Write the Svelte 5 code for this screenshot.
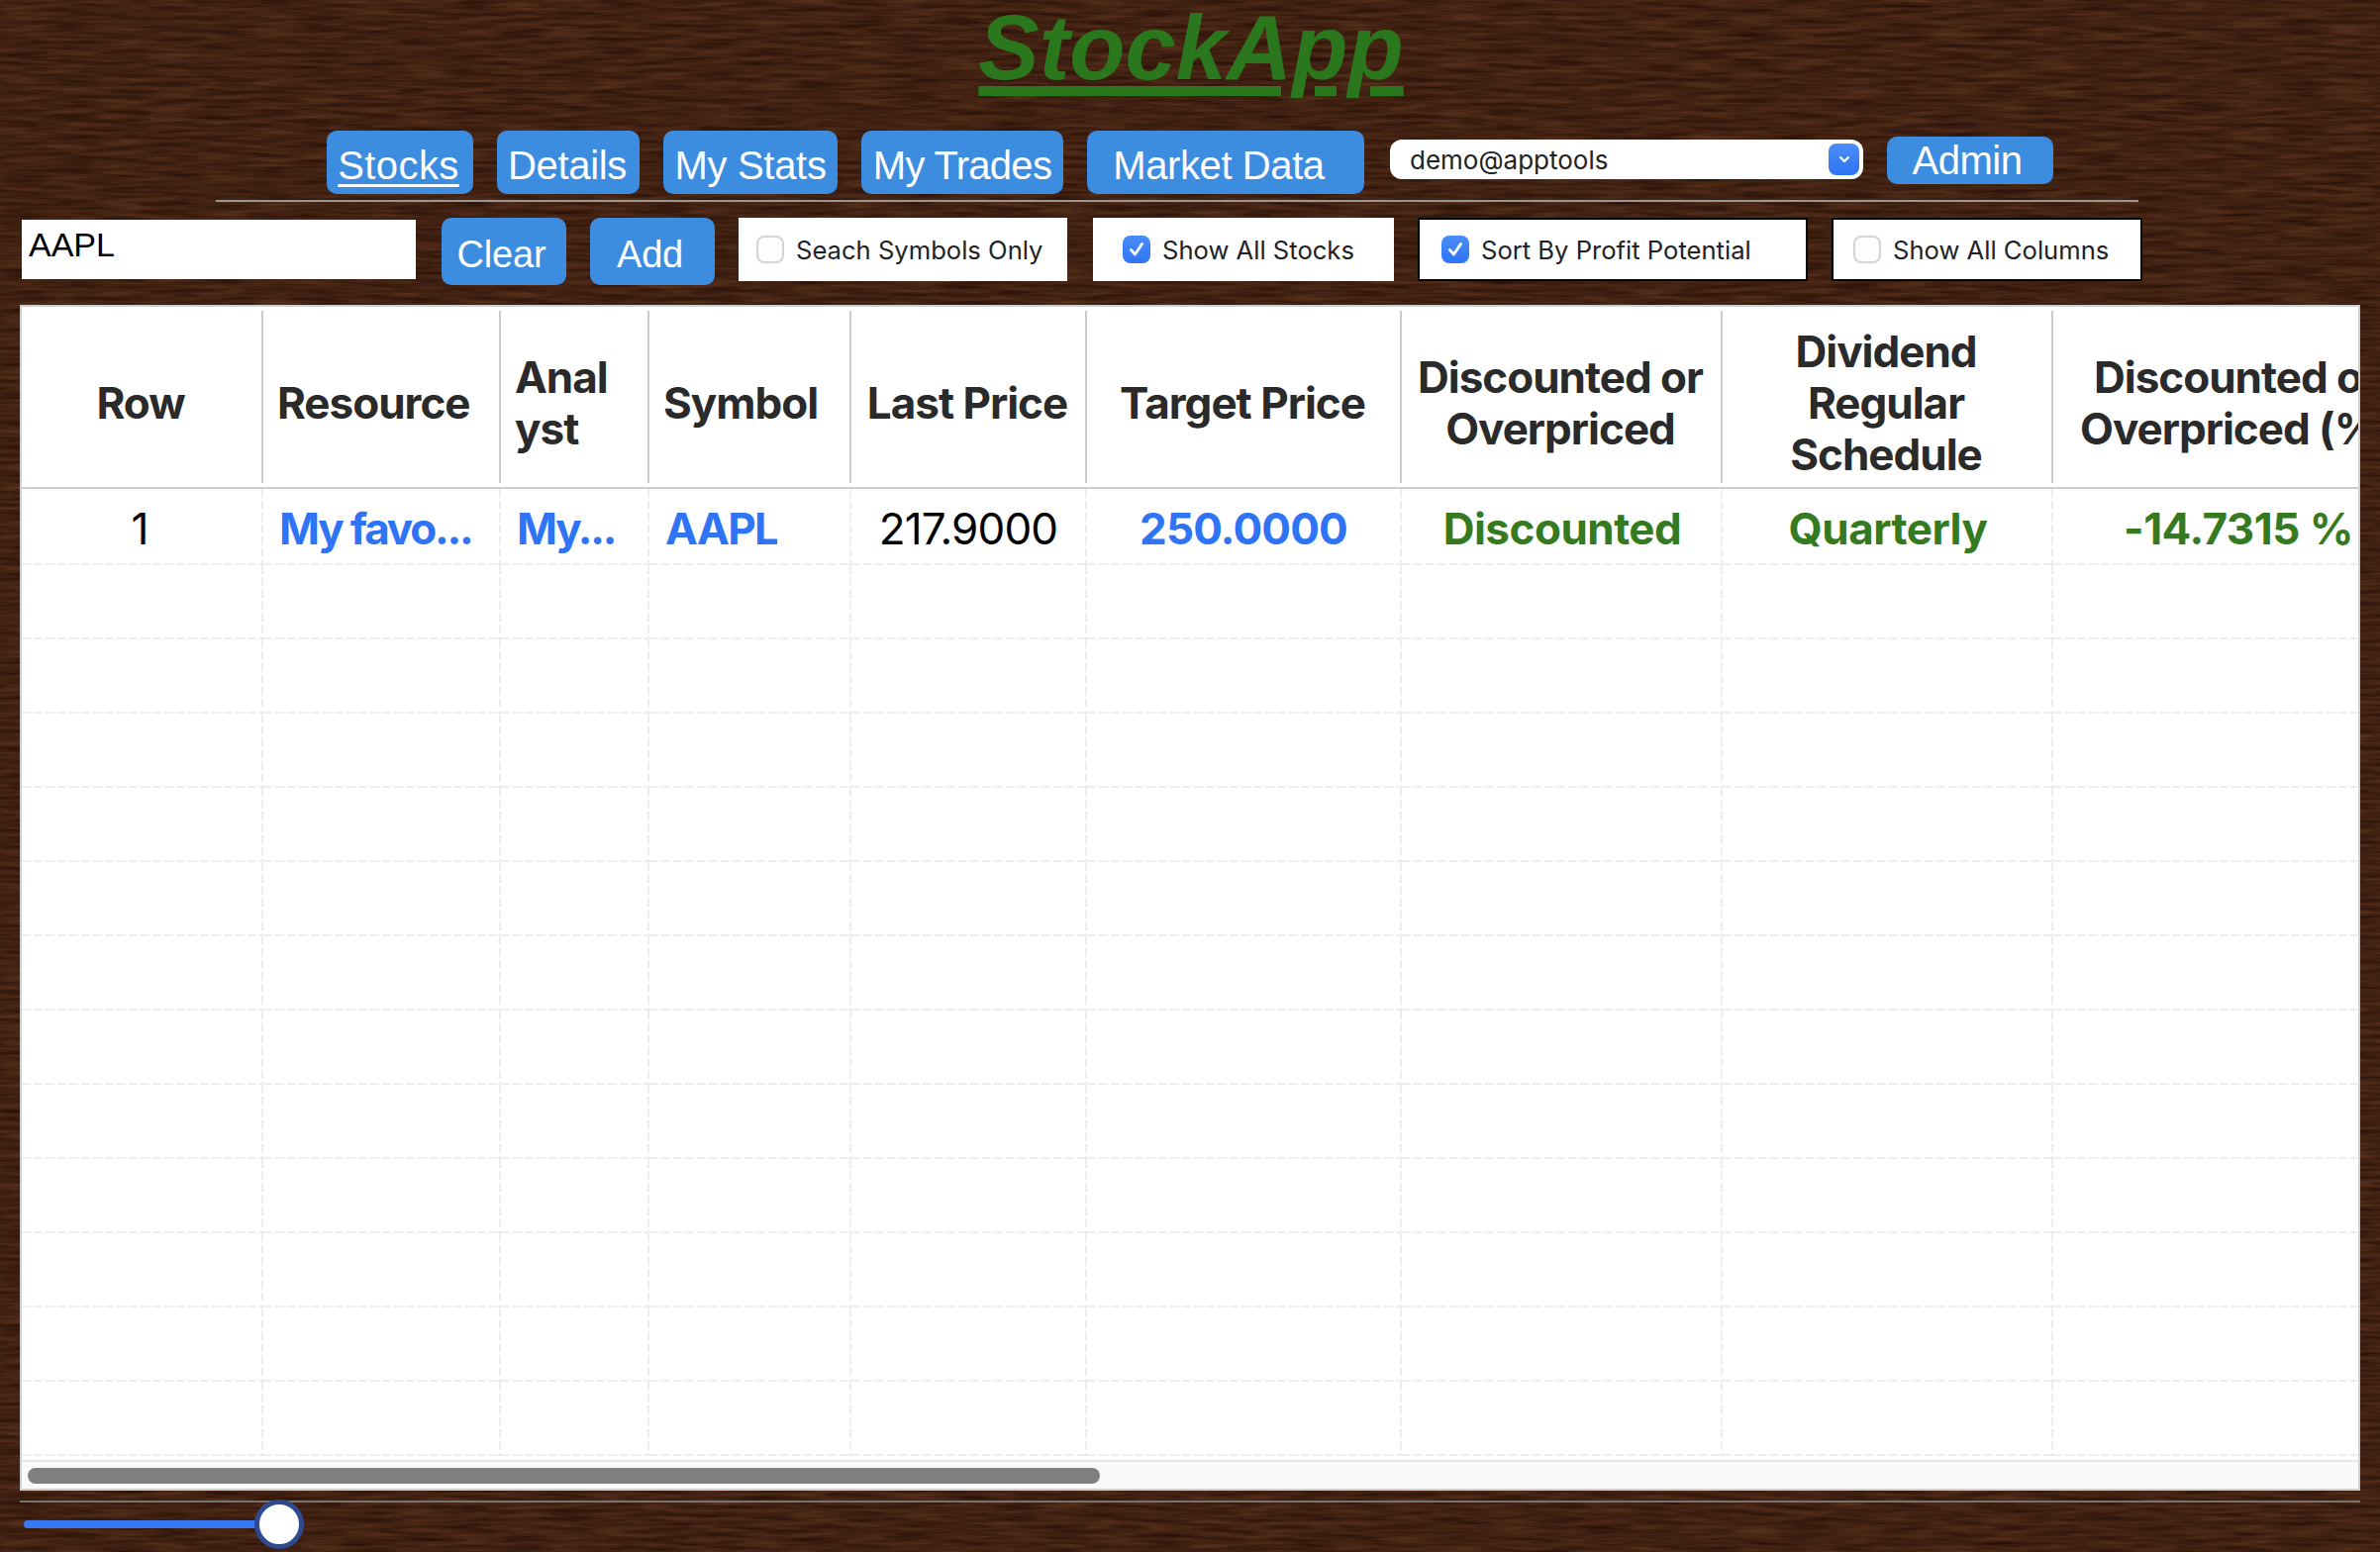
<script>
	const navItems = [
		{ label: 'Stocks', cls: 'w-stocks' },
		{ label: 'Details', cls: 'w-details' },
		{ label: 'My Stats', cls: 'w-stats' },
		{ label: 'My Trades', cls: 'w-trades' },
		{ label: 'Market Data', cls: 'w-market' }
	];
	const filters = [
		{ label: 'Seach Symbols Only', checked: false, framed: false, cls: 'f-search' },
		{ label: 'Show All Stocks', checked: true, framed: false, cls: 'f-all' },
		{ label: 'Sort By Profit Potential', checked: true, framed: true, cls: 'f-sort' },
		{ label: 'Show All Columns', checked: false, framed: true, cls: 'f-cols' }
	];
	const headers = [
		{ text: 'Row', align: 'center' },
		{ text: 'Resource', align: 'left' },
		{ text: 'Anal\u200Byst', align: 'left' },
		{ text: 'Symbol', align: 'left' },
		{ text: 'Last Price', align: 'center' },
		{ text: 'Target Price', align: 'center' },
		{ text: 'Discounted or Overpriced', align: 'center' },
		{ text: 'Dividend Regular Schedule', align: 'center' },
		{ text: 'Discounted or Overpriced (%)', align: 'center' }
	];
	const firstRow = [
		{ text: '1', cls: 'plain center row-num' },
		{ text: 'My favo...', cls: 'link left tight' },
		{ text: 'My...', cls: 'link left tight' },
		{ text: 'AAPL', cls: 'link left' },
		{ text: '217.9000', cls: 'plain center' },
		{ text: '250.0000', cls: 'link center' },
		{ text: 'Discounted', cls: 'good center' },
		{ text: 'Quarterly', cls: 'good center' },
		{ text: '-14.7315 %', cls: 'good center' }
	];
	const emptyRows = Array.from({ length: 12 });
</script>

<div class="page">
	<svg class="wood" width="2404" height="1568" aria-hidden="true">
		<filter id="grain" x="0" y="0" width="100%" height="100%" color-interpolation-filters="sRGB">
			<feTurbulence type="fractalNoise" baseFrequency="0.02 0.24" numOctaves="4" seed="7" />
			<feColorMatrix
				type="matrix"
				values="0.26 0 0 0 0.125
				        0.17 0 0 0 0.045
				        0.11 0 0 0 0.015
				        0 0 0 0 1"
			/>
		</filter>
		<rect width="2404" height="1568" filter="url(#grain)" />
	</svg>

	<div class="content">
		<h1 class="title">StockApp</h1>

		<nav class="nav">
			{#each navItems as item, i}
				<button class="nav-btn {item.cls}" class:active={i === 0}>{item.label}</button>
			{/each}
			<div class="user-select">
				<select>
					<option>demo@apptools</option>
				</select>
				<span class="chevron">
					<svg width="14" height="10" viewBox="0 0 14 10">
						<path d="M3 3 L7 7 L11 3" fill="none" stroke="#fff" stroke-width="2.2" stroke-linecap="round" stroke-linejoin="round" />
					</svg>
				</span>
			</div>
			<button class="admin-btn">Admin</button>
		</nav>
		<div class="rule top-rule"></div>

		<div class="toolbar">
			<input class="symbol-input" type="text" value="AAPL" />
			<button class="tool-btn clear">Clear</button>
			<button class="tool-btn add">Add</button>
			{#each filters as f}
				<label class="filter {f.cls}" class:framed={f.framed}>
					<span class="box" class:checked={f.checked}>
						{#if f.checked}
							<svg width="20" height="20" viewBox="0 0 20 20">
								<path d="M4.5 10.5 L8.5 15 L15.5 4.5" fill="none" stroke="#fff" stroke-width="2.8" stroke-linecap="round" stroke-linejoin="round" />
							</svg>
						{/if}
					</span>
					{f.label}
				</label>
			{/each}
		</div>

		<div class="grid-wrap">
			<div class="grid-view">
				<div class="row head">
					{#each headers as h}
						<div class="th {h.align}">
							<span>{h.text}</span>
						</div>
					{/each}
				</div>
				<div class="row body-row">
					{#each firstRow as c}
						<div class="td {c.cls}"><span>{c.text}</span></div>
					{/each}
				</div>
				{#each emptyRows as _}
					<div class="row body-row">
						{#each headers as h}
							<div class="td"></div>
						{/each}
					</div>
				{/each}
			</div>
			<div class="scrollbar">
				<div class="scroll-thumb"></div>
			</div>
		</div>

		<div class="rule bottom-rule"></div>
		<input class="zoom-slider" type="range" min="0" max="100" value="100" />
	</div>
</div>

<style>
	:global(body) {
		margin: 0;
		background: #3f2213;
	}
	.page {
		position: relative;
		width: 2404px;
		height: 1568px;
		overflow: hidden;
		font-family: Inter, "Liberation Sans", sans-serif;
	}
	.wood {
		position: absolute;
		left: 0;
		top: 0;
	}
	.content {
		position: relative;
		display: flex;
		flex-direction: column;
	}
	.title {
		margin: 0;
		height: 130px;
		padding: 2px 0 0 2px;
		text-align: center;
		font-family: "Liberation Sans", Arial, sans-serif;
		font-size: 92px;
		line-height: 92px;
		font-weight: 700;
		font-style: italic;
		color: #2b771d;
		text-decoration: underline;
		text-decoration-thickness: 10px;
		text-underline-offset: 7px;
	}
	.nav {
		display: flex;
		justify-content: center;
		align-items: flex-start;
		gap: 24px;
		height: 64px;
	}
	button {
		border: none;
		background: #3c8ddf;
		color: #fff;
		border-radius: 10px;
		font-family: "Liberation Sans", Arial, sans-serif;
		font-size: 40px;
	}
	.nav-btn {
		height: 64px;
		padding: 6px 0 0;
		letter-spacing: -0.3px;
	}
	.w-stocks {
		width: 148px;
		padding-right: 3px;
		letter-spacing: 0.4px;
	}
	.w-details { width: 144px; padding-right: 2px; }
	.w-stats { width: 176px; }
	.w-trades { width: 204px; letter-spacing: -0.7px; }
	.w-market { width: 280px; padding-right: 14px; letter-spacing: -0.4px; }
	.nav-btn.active {
		text-decoration: underline;
		text-decoration-thickness: 3px;
		text-underline-offset: 5px;
	}
	.user-select {
		position: relative;
		margin: 9px 0 0 2px;
		width: 478px;
		height: 40px;
	}
	.user-select select {
		appearance: none;
		width: 100%;
		height: 100%;
		border: none;
		border-radius: 12px;
		background: #fff;
		padding: 0 20px;
		font-family: Inter, "Liberation Sans", sans-serif;
		font-size: 26px;
		color: #222;
	}
	.chevron {
		position: absolute;
		right: 4px;
		top: 4px;
		width: 31px;
		height: 32px;
		border-radius: 8px;
		background: linear-gradient(#4a8df8, #2f74f5);
		display: flex;
		align-items: center;
		justify-content: center;
	}
	.admin-btn {
		margin-top: 6px;
		width: 168px;
		height: 48px;
		padding: 0 6px 0 0;
		letter-spacing: -0.5px;
	}
	.rule {
		height: 2px;
	}
	.top-rule {
		margin: 6px 0 0 218px;
		width: 1942px;
		background: #9b9792;
	}
	.toolbar {
		display: flex;
		align-items: flex-start;
		margin-top: 16px;
		padding-left: 22px;
		height: 88px;
	}
	.symbol-input {
		box-sizing: border-box;
		margin-top: 2px;
		width: 398px;
		height: 60px;
		border: none;
		border-radius: 0;
		padding: 0 0 10px 7px;
		background: #fff;
		color: #000;
		font-family: "Liberation Sans", Arial, sans-serif;
		font-size: 34px;
		outline: none;
	}
	.tool-btn {
		height: 68px;
		width: 126px;
		padding: 6px 5px 0 0;
		font-size: 38px;
		letter-spacing: -0.2px;
	}
	.clear {
		margin-left: 26px;
	}
	.add {
		margin-left: 24px;
	}
	.filter {
		box-sizing: border-box;
		display: flex;
		align-items: center;
		gap: 12px;
		height: 64px;
		background: #fff;
		color: #222;
		font-size: 25.6px;
		white-space: nowrap;
	}
	.filter.framed {
		border: 2px solid #000;
	}
	.f-search {
		margin-left: 24px;
		width: 332px;
		padding-left: 18px;
	}
	.f-all {
		margin-left: 26px;
		width: 304px;
		padding-left: 30px;
	}
	.f-sort {
		margin-left: 24px;
		width: 394px;
		padding-left: 22px;
	}
	.f-cols {
		margin-left: 24px;
		width: 314px;
		padding-left: 20px;
	}
	.box {
		box-sizing: border-box;
		flex: none;
		width: 28px;
		height: 28px;
		border-radius: 8px;
		border: 2px solid #d4d4d4;
		background: #fdfdfd;
		display: flex;
		align-items: center;
		justify-content: center;
	}
	.box.checked {
		border: none;
		background: linear-gradient(#4a8df8, #2f74f5);
	}
	.grid-wrap {
		box-sizing: border-box;
		margin: 0 20px;
		height: 1198px;
		background: #fff;
		border: 2px solid #cfcfcf;
		display: flex;
		flex-direction: column;
	}
	.grid-view {
		flex: 1;
		overflow: hidden;
		display: flex;
		flex-direction: column;
	}
	.row {
		flex: none;
		display: grid;
		grid-template-columns: 244px 240px 150px 204px 238px 318px 324px 334px 374px;
		width: 2426px;
	}
	.head {
		height: 182px;
		border-bottom: 2px solid #cdcdcd;
	}
	.th {
		box-sizing: border-box;
		margin: 4px 0;
		display: flex;
		align-items: center;
		padding: 12px 10px 0 14px;
		border-right: 2px solid #cbcbcb;
		font-size: 44px;
		line-height: 52px;
		font-weight: 700;
		letter-spacing: -1px;
		color: #2a2a2a;
	}
	.th.center {
		justify-content: center;
		text-align: center;
		padding: 12px 10px 0 8px;
	}
	.body-row {
		height: 75px;
	}
	.body-row:nth-child(2) {
		height: 77px;
	}
	.td {
		box-sizing: border-box;
		display: flex;
		align-items: center;
		min-width: 0;
		padding: 2px 0 0 16px;
		background:
			repeating-linear-gradient(90deg, #eeeeee 0 9px, transparent 9px 12px) left bottom / 100% 2px no-repeat,
			repeating-linear-gradient(180deg, #eeeeee 0 9px, transparent 9px 12px) right top / 2px 100% no-repeat;
		font-size: 44px;
		font-weight: 700;
		letter-spacing: -0.8px;
	}
	.td span {
		overflow: hidden;
		white-space: nowrap;
	}
	.td.center {
		justify-content: center;
		padding: 2px 2px 0 0;
	}
	.td.row-num {
		padding-right: 6px;
	}
	.plain {
		font-weight: 400;
		color: #000;
	}
	.link {
		color: #2f74f5;
	}
	.td.left {
		letter-spacing: -1.6px;
	}
	.td.tight {
		letter-spacing: -2.2px;
	}
	.good {
		color: #357a21;
	}
	.td.good {
		padding: 2px 0 0;
		letter-spacing: -0.5px;
	}
	.scrollbar {
		flex: none;
		box-sizing: border-box;
		height: 29px;
		padding: 6px 0 0 6px;
		background: #fafafa;
		border-top: 2px solid #e6e6e6;
	}
	.scroll-thumb {
		width: 1083px;
		height: 16px;
		border-radius: 8px;
		background: #7f7f7f;
	}
	.bottom-rule {
		margin: 10px 20px 0;
		background: #77736f;
	}
	.zoom-slider {
		appearance: none;
		display: block;
		margin: -4px 0 0 24px;
		padding: 0;
		width: 283px;
		height: 52px;
		background: transparent;
	}
	.zoom-slider::-webkit-slider-runnable-track {
		height: 8px;
		border-radius: 4px;
		background: #3478f6;
	}
	.zoom-slider::-webkit-slider-thumb {
		appearance: none;
		box-sizing: border-box;
		width: 50px;
		height: 50px;
		margin-top: -21px;
		border-radius: 50%;
		background: #fff;
		border: 5px solid #2f4a8e;
	}
</style>
